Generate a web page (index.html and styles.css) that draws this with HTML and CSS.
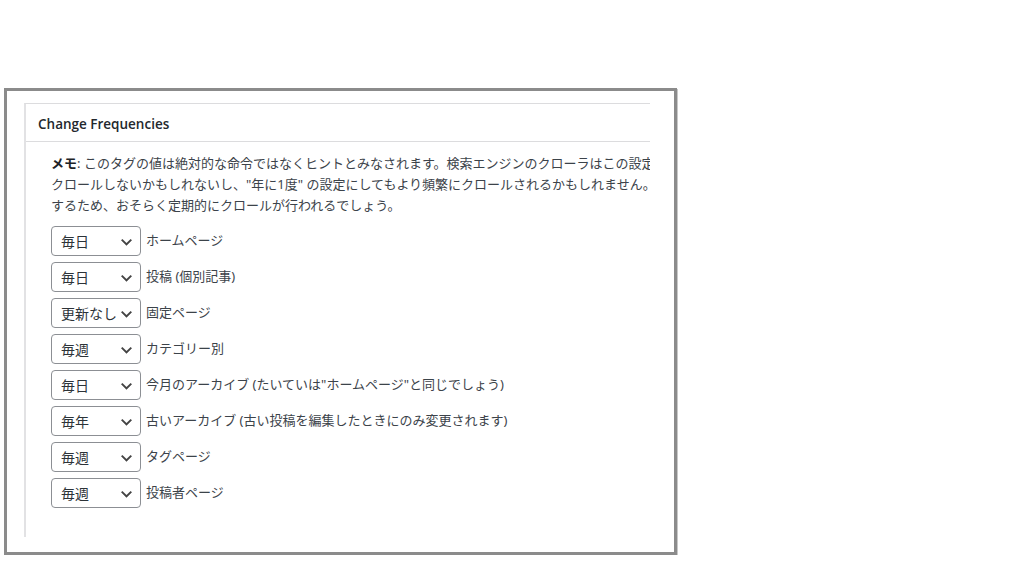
FILE: index.html
```html
<!DOCTYPE html>
<html lang="ja">
<head>
<meta charset="utf-8">
<title>Change Frequencies</title>
<link rel="stylesheet" href="styles.css">
</head>
<body>
<div class="frame">
  <div class="clip">
    <div class="postbox">
      <div class="postbox-header">
        <h2 class="hndle">Change Frequencies</h2>
      </div>
      <div class="inside">
        <p class="note">
          <span class="line"><b>メモ</b>: このタグの値は絶対的な命令ではなくヒントとみなされます。検索エンジンのクローラはこの設定を考慮に入れますが、"毎時" の設定にしても頻繁に</span>
          <span class="line">クロールしないかもしれないし、"年に1度" の設定にしてもより頻繁にクロールされるかもしれません。また "更新なし" に設定されたページも、予期しない変更に対応</span>
          <span class="line">するため、おそらく定期的にクロールが行われるでしょう。</span>
        </p>
        <ul class="freq-list">
          <li class="freq-row">
            <select class="freq-select"><option>毎日</option></select>
            <label class="freq-label">ホームページ</label>
          </li>
          <li class="freq-row">
            <select class="freq-select"><option>毎日</option></select>
            <label class="freq-label">投稿 (個別記事)</label>
          </li>
          <li class="freq-row">
            <select class="freq-select"><option>更新なし</option></select>
            <label class="freq-label">固定ページ</label>
          </li>
          <li class="freq-row">
            <select class="freq-select"><option>毎週</option></select>
            <label class="freq-label">カテゴリー別</label>
          </li>
          <li class="freq-row">
            <select class="freq-select"><option>毎日</option></select>
            <label class="freq-label">今月のアーカイブ (たいていは"ホームページ"と同じでしょう)</label>
          </li>
          <li class="freq-row">
            <select class="freq-select"><option>毎年</option></select>
            <label class="freq-label">古いアーカイブ (古い投稿を編集したときにのみ変更されます)</label>
          </li>
          <li class="freq-row">
            <select class="freq-select"><option>毎週</option></select>
            <label class="freq-label">タグページ</label>
          </li>
          <li class="freq-row">
            <select class="freq-select"><option>毎週</option></select>
            <label class="freq-label">投稿者ページ</label>
          </li>
        </ul>
      </div>
    </div>
  </div>
</div>
</body>
</html>
```

FILE: styles.css
```css
html, body {
  margin: 0;
  padding: 0;
  background: #ffffff;
}

body {
  font-family: "Noto Sans", "Noto Sans CJK JP", sans-serif;
  color: #3c434a;
}

.frame {
  margin: 88px 0 0 4px;
  width: 667px;
  height: 461px;
  border: 3px solid #8b8b8b;
  box-shadow: 1px 1px 0 #c8c8c8;
  background: #ffffff;
  display: flex;
}

.clip {
  width: 643px;
  height: 100%;
  overflow: hidden;
  padding-top: 12px;
  box-sizing: border-box;
}

.postbox {
  margin-left: 17px;
  width: 760px;
  height: 434px;
  border-top: 1px solid #dcdcde;
  border-left: 2px solid #e2e2e4;
  box-sizing: border-box;
  background: #ffffff;
}

.postbox-header {
  height: 38px;
  padding-top: 3px;
  border-bottom: 1px solid #dcdcde;
  display: flex;
  align-items: center;
  box-sizing: border-box;
}

.hndle {
  margin: 0;
  padding-left: 12px;
  font-family: "Open Sans", "Noto Sans", sans-serif;
  font-size: 13.5px;
  font-weight: 600;
  color: #23282d;
}

.inside {
  padding: 11px 0 0 25px;
}

.note {
  margin: 0 0 10px 0;
  font-size: 13px;
  line-height: 21px;
  color: #3c434a;
}

.note b {
  color: #1d2327;
  font-weight: 700;
}

.line {
  display: block;
  white-space: nowrap;
}

.freq-list {
  list-style: none;
  margin: 0;
  padding: 0;
  display: flex;
  flex-direction: column;
  gap: 6px;
}

.freq-row {
  display: flex;
  align-items: center;
  gap: 5px;
}

.freq-select {
  -webkit-appearance: none;
  appearance: none;
  width: 90px;
  height: 30px;
  margin: 0;
  padding: 0 20px 0 9px;
  border: 1px solid #8c8f94;
  border-radius: 4px;
  background: #ffffff url("data:image/svg+xml;charset=utf-8,%3Csvg xmlns='http://www.w3.org/2000/svg' width='20' height='20' viewBox='0 0 20 20'%3E%3Cpath d='M4.5 6.5l5.5 5.5 5.5-5.5 1.8 1.8-7.3 7.3-7.3-7.3z' fill='%23444'/%3E%3C/svg%3E") no-repeat right 6px top 55%;
  background-size: 15px 15px;
  font-family: "Noto Sans CJK JP", sans-serif;
  font-size: 14px;
  color: #2c3338;
  line-height: 28px;
  box-sizing: border-box;
}

.freq-label {
  font-size: 13px;
  line-height: 22px;
  margin-top: -2px;
  color: #3c434a;
  white-space: nowrap;
}
```
